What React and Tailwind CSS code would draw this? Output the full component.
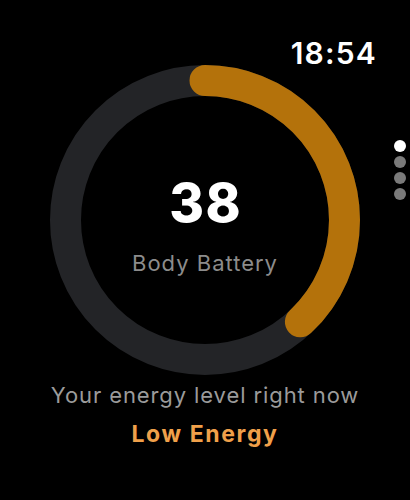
import React from "react";

const value = 38;
const R = 139.5;
const C = 2 * Math.PI * R;

const Ring = () => (
  <svg width="310" height="310" viewBox="0 0 310 310">
    <circle cx="155" cy="155" r={R} fill="none" stroke="#232427" strokeWidth="31" />
    <circle
      cx="155"
      cy="155"
      r={R}
      fill="none"
      stroke="#b4720b"
      strokeWidth="31"
      strokeLinecap="round"
      strokeDasharray={`${(C * value) / 100} ${C}`}
      transform="rotate(-90 155 155)"
    />
  </svg>
);

const PageDots = () => (
  <div className="flex flex-col gap-[4px] pt-[75px]">
    <span className="w-[12px] h-[12px] rounded-full bg-white" />
    <span className="w-[12px] h-[12px] rounded-full bg-[#7a7a7a]" />
    <span className="w-[12px] h-[12px] rounded-full bg-[#7a7a7a]" />
    <span className="w-[12px] h-[12px] rounded-full bg-[#7a7a7a]" />
  </div>
);

export default function App() {
  return (
    <div className="w-[410px] h-[500px] bg-black overflow-hidden" style={{ fontFamily: "Inter, 'Noto Sans', sans-serif" }}>
      <div className="h-[65px] flex justify-end pr-[33px] pt-[38px]">
        <span className="text-white text-[30px] leading-none font-semibold tracking-[1.2px]">18:54</span>
      </div>
      <div className="flex">
        <div className="w-[50px]" />
        <div className="relative w-[310px] h-[310px]">
          <Ring />
          <div className="absolute inset-0 flex flex-col items-center pt-[112px]">
            <span className="text-white text-[53px] leading-none font-extrabold tracking-[1.5px] pl-[1.5px]">{value}</span>
            <span className="text-[#8c8c8c] text-[22px] leading-none tracking-[1px] mt-[22px]">Body Battery</span>
          </div>
        </div>
        <div className="flex-1 flex justify-end pr-[4px]">
          <PageDots />
        </div>
      </div>
      <div className="flex flex-col items-center mt-[9px]">
        <span className="text-[#9b9b9b] text-[22px] leading-none tracking-[0.9px]">Your energy level right now</span>
        <span className="text-[#f0a04a] text-[23px] leading-none font-bold tracking-[1.6px] mt-[17px]">Low Energy</span>
      </div>
    </div>
  );
}
